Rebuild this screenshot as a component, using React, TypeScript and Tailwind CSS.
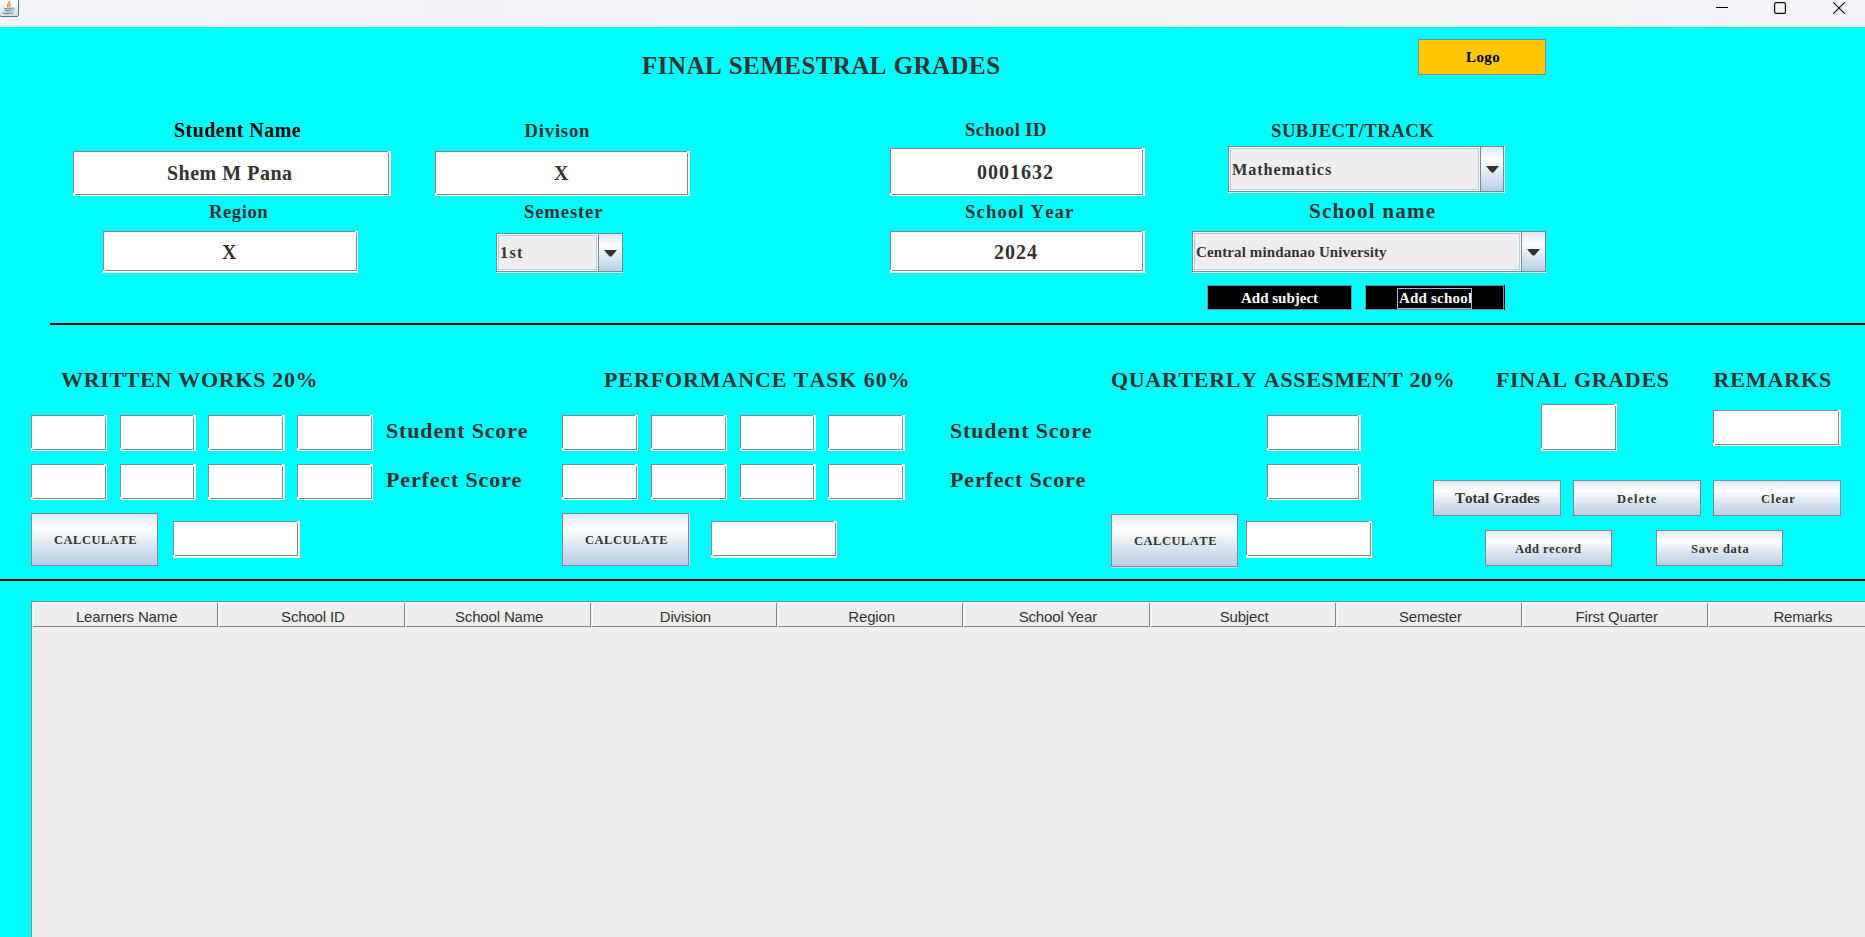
import React from "react";
import { clsx } from "clsx";

const serif = "font-['Liberation_Serif',serif] font-bold whitespace-pre leading-[20px] h-[20px] [font-kerning:none]";
const gradient = "bg-[linear-gradient(to_bottom,#dde8f3_0%,#ffffff_30%,#dde8f3_60%,#b8cfe5_100%)]";

function Text({ className, children }: { className?: string; children: React.ReactNode }) {
  return <div className={clsx(serif, "shrink-0", className)}>{children}</div>;
}

/* Swing-style text field: grey outline with a white highlight on the right and bottom. */
function Field({ className, children }: { className: string; children?: React.ReactNode }) {
  return (
    <div className={clsx("relative shrink-0 bg-white", className)}>
      <div className="h-full w-full border border-[#7a8a99]">{children}</div>
      <span className="absolute right-0 top-0 h-[2px] w-[3px] bg-white" />
      <span className="absolute bottom-0 left-0 h-[3px] w-[2px] bg-white" />
    </div>
  );
}

function Button({ className, children }: { className: string; children: React.ReactNode }) {
  return (
    <button className={clsx("flex shrink-0 items-start border border-[#7a8a99] text-left text-[#333333]", gradient, className)}>
      {children}
    </button>
  );
}

function Combo({ className, arrow, children }: { className: string; arrow: string; children: React.ReactNode }) {
  return (
    <div className={clsx("shrink-0 bg-[#eef2f5]", className)}>
      <div className="flex h-full border border-[#7a8a99] bg-[#f5f7f9]">
        <div className="flex-1 p-px">
          <div className="flex h-full items-center border border-[#b8cfe5] bg-[#eeeeee] text-[#333333]">{children}</div>
        </div>
        <div className={clsx("flex items-center justify-center border-l border-[#7a8a99] pt-px", gradient, arrow)}>
          <svg width="13" height="7" viewBox="0 0 13 7" fill="#333333">
            <path d="M0 0h13L7.5 6.5h-2z" />
          </svg>
        </div>
      </div>
    </div>
  );
}

function JavaIcon() {
  return (
    <svg width="19" height="17" viewBox="0 0 19 17" fill="none">
      <defs>
        <linearGradient id="tile" x1="0" y1="0" x2="0" y2="1">
          <stop offset="0" stopColor="#ffffff" />
          <stop offset="1" stopColor="#d9dee2" />
        </linearGradient>
      </defs>
      <path d="M0 0H19V15L17.500 17H1L0 16Z" fill="#54768c" />
      <path d="M0 0H18V15L17 16H1L0 15Z" fill="url(#tile)" />
      <path d="M9.500 1.200C10 3.500 6 4.200 7.800 7.500M10.800 3.800C8.500 5.200 10.500 5.800 9.300 7.600" stroke="#ee8a3a" strokeWidth="1.500" />
      <path d="M4 8.300C6 9 10 9 12 8.300M4.800 10.300C6.500 11 10 11 11.300 10.300M2.500 12.800C5 13.800 11 13.800 13.500 12.500" stroke="#6f93ad" strokeWidth="1.300" />
      <path d="M12 8C15 7.600 14.500 10 12 10.500" stroke="#6f93ad" />
    </svg>
  );
}

function TitleBar() {
  return (
    <div className="flex h-[27px] bg-[linear-gradient(to_right,#f1f3f7,#f3f1f7_25%,#f1f3f6_45%,#f3f3f3_75%,#f2f3f6_90%,#f3f2f6)]">
      <JavaIcon />
      <div className="ml-auto flex pr-[20px] pt-[2px]">
        <svg width="12" height="12" viewBox="0 0 12 12" stroke="#000">
          <path d="M0 5.500H12" />
        </svg>
        <svg className="ml-[46px]" width="12" height="12" viewBox="0 0 12 12" fill="none" stroke="#111">
          <rect x=".6" y=".6" width="10.800" height="10.800" rx="1" strokeWidth="1.200" />
        </svg>
        <svg className="ml-[47px]" width="12" height="12" viewBox="0 0 12 12" stroke="#111">
          <path d="M.2.2L11.800 11.800M11.800.2L.2 11.800" strokeWidth="1.100" />
        </svg>
      </div>
    </div>
  );
}

function Details() {
  const label = "text-[18.75px]";
  return (
    <div className="flex h-[203px] text-[#333333]">
      <div className="ml-[73px] w-[362px] shrink-0">
        <Text className="ml-[101px] text-[20px] tracking-[0.45px] text-black">Student Name</Text>
        <Field className="mt-[11px] h-[45px] w-[318px] pb-px pr-[2px]">
          <Text className="pl-[93px] pt-[11px] text-[20px] tracking-[0.5px]">Shem M Pana</Text>
        </Field>
        <Text className={clsx(label, "ml-[136px] mt-[6px] tracking-[0.5px]")}>Region</Text>
        <Field className="ml-[30px] mt-[9px] h-[42px] w-[255px] pb-[2px] pr-px">
          <Text className="pl-[118px] pt-[10px] text-[20px]">X</Text>
        </Field>
      </div>
      <div className="w-[455px] shrink-0">
        <Text className={clsx(label, "ml-[89.5px] mt-[1px] tracking-[0.75px]")}>Divison</Text>
        <Field className="mt-[10px] h-[45px] w-[255px] pb-px pr-[2px]">
          <Text className="pl-[118px] pt-[11px] text-[20px]">X</Text>
        </Field>
        <Text className={clsx(label, "ml-[89px] mt-[6px] tracking-[0.8px]")}>Semester</Text>
        <Combo className="ml-[61px] mt-[11px] h-[40px] w-[127px] pb-px" arrow="w-[24px]">
          <Text className="pl-px text-[16.25px] tracking-[1.3px]">1st</Text>
        </Combo>
      </div>
      <div className="w-[302px] shrink-0">
        <Text className={clsx(label, "ml-[75px] tracking-[0.35px]")}>School ID</Text>
        <Field className="mt-[8px] h-[48px] w-[255px] pb-px pr-[2px]">
          <Text className="pl-[86px] pt-[13px] text-[20px] tracking-[1px]">0001632</Text>
        </Field>
        <Text className={clsx(label, "ml-[75px] mt-[6px] tracking-[1.1px]")}>School Year</Text>
        <Field className="mt-[9px] h-[42px] w-[255px] pb-[2px] pr-[2px]">
          <Text className="pl-[103px] pt-[10px] text-[20px] tracking-[1px]">2024</Text>
        </Field>
      </div>
      <div className="w-[354px] shrink-0">
        <Text className={clsx(label, "ml-[79px] mt-px tracking-[0.45px]")}>SUBJECT/TRACK</Text>
        <Combo className="ml-[36px] mt-[5px] h-[47px] w-[277px] pb-px pr-px" arrow="w-[23px]">
          <Text className="mt-[2px] pl-px text-[16.25px] tracking-[0.9px]">Mathematics</Text>
        </Combo>
        <Text className="ml-[117px] mt-[8px] text-[21.25px] tracking-[1.1px]">School name</Text>
        <Combo className="mt-[10px] h-[42px] w-[354px] pb-px" arrow="w-[24px]">
          <Text className="pl-[1px] text-[15px] tracking-[0.12px]">Central mindanao University</Text>
        </Combo>
        <div className="ml-[15px] mt-[12px] flex gap-[13px] text-[15px] text-white">
          <button className="flex h-[25px] w-[145px] items-start border border-[#7a8a99] bg-black pl-[33px] pt-[2px] text-left">
            <Text>Add subject</Text>
          </button>
          <div className="bg-black pr-px">
            <button className="flex h-[25px] w-[139px] items-start border border-[#7a8a99] bg-black pl-[31px] pt-[2px] text-left">
              <div className="h-[21px] w-[75px] overflow-hidden border border-[#a3b8cc] pl-px">
                <Text className="-mt-px tracking-[0.2px]">Add school</Text>
              </div>
            </button>
          </div>
        </div>
      </div>
    </div>
  );
}

const writtenBoxes = ["w-[76px] pr-px", "ml-[13px] w-[76px] pr-[2px]", "ml-[12px] w-[77px] pr-[2px]", "ml-[12px] w-[76px] pr-px"];
const taskBoxes = ["w-[76px] pr-px", "ml-[13px] w-[76px] pr-px", "ml-[13px] w-[76px] pr-[2px]", "ml-[12px] w-[77px] pr-[2px]"];

function ScoreRow({ boxes, label, gap }: { boxes: string[]; label: string; gap: string }) {
  return (
    <div className="mb-[13px] flex h-[36px]">
      {boxes.map((box, i) => (
        <Field key={i} className={clsx("h-[36px] pb-px", box)} />
      ))}
      <Text className={clsx("mt-[6px] text-[22px] tracking-[0.85px]", gap)}>{label}</Text>
    </div>
  );
}

function Scores() {
  const calcButton = "h-[53px] w-[127px] pl-[22px] pt-[16px]";
  const calc = "text-[12.5px] tracking-[0.5px]";
  const action = "text-[12.5px]";
  return (
    <div className="flex h-[254px] pt-[45px] text-[#333333]">
      <div className="ml-[31px] w-[531px] shrink-0">
        <Text className="mb-[25px] ml-[30px] text-[22px] tracking-[0.68px]">WRITTEN WORKS 20%</Text>
        <ScoreRow boxes={writtenBoxes} label="Student Score" gap="ml-[13px]" />
        <ScoreRow boxes={writtenBoxes} label="Perfect Score" gap="ml-[13px]" />
        <div className="flex">
          <Button className={calcButton}>
            <Text className={calc}>CALCULATE</Text>
          </Button>
          <Field className="ml-[15px] mt-[8px] h-[37px] w-[127px] pb-[2px] pr-[2px]" />
        </div>
      </div>
      <div className="w-[549px] shrink-0">
        <Text className="mb-[25px] ml-[42px] text-[22px] tracking-[0.9px]">PERFORMANCE TASK 60%</Text>
        <ScoreRow boxes={taskBoxes} label="Student Score" gap="ml-[45px]" />
        <ScoreRow boxes={taskBoxes} label="Perfect Score" gap="ml-[45px]" />
        <div className="flex items-start">
          <div className="bg-[#c9dcea] pr-px">
            <Button className={calcButton}>
              <Text className={calc}>CALCULATE</Text>
            </Button>
          </div>
          <Field className="ml-[21px] mt-[8px] h-[37px] w-[126px] pb-[2px] pr-px" />
        </div>
      </div>
      <div className="w-[322px] shrink-0">
        <Text className="mb-[25px] text-[22px] tracking-[0.68px]">QUARTERLY ASSESMENT 20%</Text>
        <Field className="mb-[13px] ml-[156px] h-[36px] w-[94px] pb-px pr-[2px]" />
        <Field className="mb-[13px] ml-[156px] h-[36px] w-[94px] pb-px pr-[2px]" />
        <div className="flex items-start">
          <div className="mt-px bg-[#c9dcea] pb-px">
            <Button className={calcButton}>
              <Text className={calc}>CALCULATE</Text>
            </Button>
          </div>
          <Field className="ml-[8px] mt-[8px] h-[37px] w-[126px] pb-[2px] pr-px" />
        </div>
      </div>
      <div className="w-[408px] shrink-0">
        <div className="flex h-[110px]">
          <div className="w-[280px]">
            <Text className="ml-[63px] text-[22px] tracking-[0.67px]">FINAL GRADES</Text>
            <Field className="ml-[108px] mt-[14px] h-[47px] w-[76px] pb-px pr-px" />
          </div>
          <div className="w-[128px]">
            <Text className="ml-[0.5px] text-[22px] tracking-[0.9px]">REMARKS</Text>
            <Field className="mt-[20px] h-[36px] w-[128px] pb-px pr-[2px]" />
          </div>
        </div>
        <div className="flex gap-[12px]">
          <Button className="h-[36px] w-[128px] pl-[21px] pt-[7px]">
            <Text className="text-[15px]">Total Grades</Text>
          </Button>
          <Button className="h-[36px] w-[128px] pl-[43px] pt-[8px]">
            <Text className={clsx(action, "tracking-[1.2px]")}>Delete</Text>
          </Button>
          <Button className="h-[36px] w-[128px] pl-[47px] pt-[8px]">
            <Text className={clsx(action, "tracking-[1px]")}>Clear</Text>
          </Button>
        </div>
        <div className="ml-[52px] mt-[14px] flex gap-[44px]">
          <Button className="h-[36px] w-[127px] pl-[29px] pt-[8px]">
            <Text className={clsx(action, "tracking-[0.5px]")}>Add record</Text>
          </Button>
          <Button className="h-[36px] w-[127px] pl-[34px] pt-[8px]">
            <Text className={clsx(action, "tracking-[0.75px]")}>Save data</Text>
          </Button>
        </div>
      </div>
    </div>
  );
}

const columns = ["Learners Name", "School ID", "School Name", "Division", "Region", "School Year", "Subject", "Semester", "First Quarter", "Remarks"];

function RecordsTable() {
  return (
    <div className="ml-[31px] mt-[20px] flex-1 overflow-hidden border-l border-t border-[#7a8a99] bg-[#eeeeee]">
      <div className="flex h-[25px] w-[1862.5px] border-t border-[#f4f4f4]">
        {columns.map((name) => (
          <div key={name} className="w-[186.25px] shrink-0 pl-px">
            <div className="h-[24px] border-b border-r border-[#7a8a99]">
              <div className="h-full border-l border-t border-white pl-[2px] pt-[3px] text-center font-['Liberation_Sans',sans-serif] text-[15px] leading-[20px] tracking-[-0.15px] text-[#333333]">
                {name}
              </div>
            </div>
          </div>
        ))}
      </div>
    </div>
  );
}

export default function App() {
  return (
    <div className="flex h-[937px] w-[1865px] flex-col overflow-hidden bg-[#00ffff]">
      <TitleBar />
      <div className="flex h-[93px] text-[#333333]">
        <Text className="ml-[642px] mt-[29px] w-[776px] text-[25px] tracking-[0.45px]">FINAL SEMESTRAL GRADES</Text>
        <button className="mt-[12px] block h-[36px] w-[128px] border border-[#7a8a99] bg-[#ffc800] pl-[47px] text-left text-black">
          <Text className="text-[15px] tracking-[0.4px]">Logo</Text>
        </button>
      </div>
      <Details />
      <div className="ml-[50px] h-[2px] bg-black" />
      <Scores />
      <div className="h-[2px] bg-black" />
      <RecordsTable />
    </div>
  );
}
